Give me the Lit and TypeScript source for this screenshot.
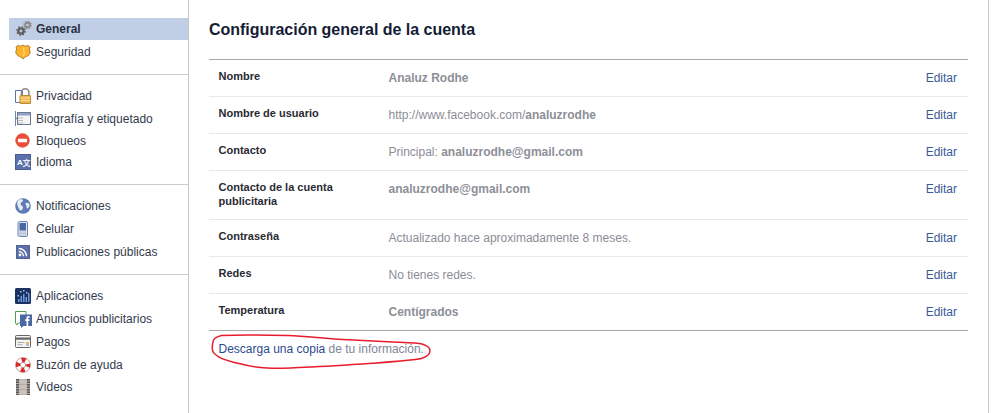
import { LitElement, html, css, svg } from "lit";
import { customElement } from "lit/decorators.js";

const icons: Record<string, unknown> = {
  gear: svg`<g fill="none" stroke="#5f5f5f"><circle cx="6" cy="10" r="2.600" stroke-width="2.400"/><circle cx="6" cy="10" r="4.200" stroke-width="1.400" stroke-dasharray="1.500 1.800"/></g>
    <g fill="none" stroke="#8a8a8a"><circle cx="12.500" cy="4" r="2.300" stroke-width="2"/><circle cx="12.500" cy="4" r="3.700" stroke-width="1.200" stroke-dasharray="1.400 1.500"/></g>`,
  shield: svg`<path d="M3 1.500c1.500.8 3.500.8 5-.5 1.500 1.300 3.500 1.300 5 .5l2 1.500c-.8 1.500-.8 2.500 0 4 .8 3-1.500 4.500-3.500 5.500-1.500.6-2.500 1.200-3.500 2.500-1-1.300-2-1.900-3.500-2.500C2.500 11.500.2 10 1 7c.8-1.500.8-2.500 0-4z" fill="#fcb52a" stroke="#b57f34" stroke-width="1"/><path d="M8.500 3.500c1.200 2-.8 3 .6 4.800 1 1.500-.6 2.500-.8 3.700" fill="none" stroke="#fdd680" stroke-width="1.200"/>`,
  lock: svg`<path d="M.5 2.500h7v12h-7z" fill="#fff" stroke="#5a75ad"/><path d="M6.500 8V4.500a3.700 3.700 0 0 1 7.400 0V8" fill="none" stroke="#8a8a8a" stroke-width="1.600"/><rect x="5" y="7.500" width="10.500" height="8" rx=".5" fill="#f1b74b" stroke="#b98a35"/><path d="M5.500 10h9.500M5.500 12.500h9.500" stroke="#fae0a3"/>`,
  timeline: svg`<path d="M.5 0v15" stroke="#6d84b4"/><path d="M.5 7.500l2-1.500v3z" fill="#6d84b4"/><rect x="2.500" y="1.500" width="13" height="12" fill="#f4f4f4" stroke="#6d7a95"/><path d="M3 2h12v2.500H3z" fill="#8fa3c7"/><path d="M3 7h5M3 9.500h5M3 12h5" stroke="#bbb"/>`,
  block: svg`<circle cx="7.500" cy="7.500" r="7.200" fill="#ea4f3a"/><rect x="3" y="5.800" width="9" height="3.400" rx=".5" fill="#fff"/>`,
  lang: svg`<rect x=".5" y=".5" width="15" height="15" fill="#5c71ab" stroke="#4a5c96"/><text x="2" y="11" font-size="8" font-weight="700" font-family="Liberation Sans" fill="#fff">A</text><text x="7.500" y="11.500" font-size="8" font-weight="700" font-family="Noto Sans CJK SC" fill="#eef1f8">文</text>`,
  globe: svg`<circle cx="8" cy="8" r="7.800" fill="#5f7bb5"/><path d="M4 1.800c2-.8 4-.5 4 .8 0 1.500-2.200 1.500-2.400 3.200-.2 1.800 2 1.600 2.400 3.200.3 1.500-1 3-2 3.800C4 12 3.400 9.500 2.700 8 1.600 6 2 3 4 1.800zM11 5c1.500-.6 3.400.2 3.600 2 .1 1.800-1.400 3.600-2.400 3.400-1-.3-.4-2-1-3C10.500 6.500 10 5.500 11 5z" fill="#e6eaf3"/>`,
  phone: svg`<rect x="3" y=".5" width="9.500" height="15" rx="1.500" fill="#dfe4ee" stroke="#6d84b4"/><rect x="4.500" y="2" width="6.500" height="7.500" fill="#4a66a5"/><path d="M4.500 11h6.500M4.500 12.500h6.500M4.500 14h6.500" stroke="#8fa0c2" stroke-dasharray="1 1"/>`,
  rss: svg`<rect x="1.500" y="1.500" width="13" height="13" fill="#5b70a9" stroke="#4f629a"/><circle cx="5" cy="11" r="1.400" fill="#fff"/><path d="M3.700 7.500a4.800 4.800 0 0 1 4.800 4.800M3.700 4.500a7.800 7.800 0 0 1 7.800 7.800" fill="none" stroke="#fff" stroke-width="1.400"/>`,
  apps: svg`<rect width="16" height="16" rx="1.500" fill="#1b3163"/><path d="M3 14h1.500v-3H3zM5.500 14H7V8H5.500zM8 14h1.500V6H8zM10.500 14H12V9h-1.500zM13 14h1.500V5H13z" fill="#6f9bdc"/><path d="M5 3h1.500v1.500H5zM8 2h1.500v1.500H8zM11 4h1.500v1.500H11zM2.500 7H4v1.500H2.500z" fill="#a9c0e8"/>`,
  ads: svg`<path d="M.5.500h10.500v11.500H3l-1 2-1.500-2z" fill="#fff" stroke="#4ea24e"/><path d="M5 3.500h12V15H8.500L6 17V15H5z" fill="#4b66a5"/><path d="M11.500 15v-5h-1.300V8.200h1.300V7c0-1.300.8-1.900 2-1.900h1.100v1.600h-.8c-.5 0-.6.200-.6.600v.9h1.400L14.400 10h-1.200v5z" fill="#fff"/>`,
  card: svg`<rect x=".5" y="1.500" width="15" height="12" rx="1" fill="#f4f4f4" stroke="#666"/><rect x="1" y="3.500" width="14" height="2.200" fill="#666"/><path d="M2.500 8.500h7M2.500 10.700h5" stroke="#a9a9a9"/><path d="M11 9h3" stroke="#e8a03a" stroke-width="1.500"/><path d="M11 11h3" stroke="#6d84b4"/>`,
  buoy: svg`<circle cx="8" cy="8" r="5" fill="none" stroke="#fff" stroke-width="4.400"/><circle cx="8" cy="8" r="5" fill="none" stroke="#d82c2c" stroke-width="4.400" stroke-dasharray="3.900 3.950" stroke-dashoffset="1.950"/><circle cx="8" cy="8" r="7.400" fill="none" stroke="#9a3a3a" stroke-width=".5"/><circle cx="8" cy="8" r="2.700" fill="none" stroke="#9a3a3a" stroke-width=".5"/>`,
  film: svg`<rect x="1" y="0" width="14" height="16" fill="#b4aea7"/><rect x="4.500" y=".8" width="7" height="4" fill="#c9c3bc"/><rect x="4.500" y="6" width="7" height="4" fill="#c9c3bc"/><rect x="4.500" y="11.200" width="7" height="4" fill="#c9c3bc"/><path d="M2.500 0v16M13.500 0v16" stroke="#555" stroke-width="3" stroke-dasharray="1.500 1"/>`,
};

type Item = { icon: string; label: string; cls?: string };
const groups: Item[][] = [
  [{ icon: "gear", label: "General", cls: "active" }, { icon: "shield", label: "Seguridad" }],
  [
    { icon: "lock", label: "Privacidad" },
    { icon: "timeline", label: "Biografía y etiquetado" },
    { icon: "block", label: "Bloqueos", cls: "pull1" },
    { icon: "lang", label: "Idioma", cls: "pull2" },
  ],
  [
    { icon: "globe", label: "Notificaciones" },
    { icon: "phone", label: "Celular" },
    { icon: "rss", label: "Publicaciones públicas" },
  ],
  [
    { icon: "apps", label: "Aplicaciones" },
    { icon: "ads", label: "Anuncios publicitarios" },
    { icon: "card", label: "Pagos" },
    { icon: "buoy", label: "Buzón de ayuda" },
    { icon: "film", label: "Videos", cls: "pull1" },
  ],
];

const rows = [
  { label: html`Nombre`, value: html`<b>Analuz Rodhe</b>` },
  { label: html`Nombre de usuario`, value: html`http://www.facebook.com/<b>analuzrodhe</b>` },
  { label: html`Contacto`, value: html`Principal: <b>analuzrodhe@gmail.com</b>` },
  { label: html`Contacto de la cuenta publicitaria`, value: html`<b>analuzrodhe@gmail.com</b>`, tall: true },
  { label: html`Contraseña`, value: html`Actualizado hace aproximadamente 8 meses.` },
  { label: html`Redes`, value: html`No tienes redes.` },
  { label: html`Temperatura`, value: html`<b>Centígrados</b>` },
];

@customElement("app-root")
export class AppRoot extends LitElement {
  static styles = css`
    :host {
      display: flex;
      width: 997px;
      height: 413px;
      background: #fff;
      font-family: "Liberation Sans", Arial, sans-serif;
      font-size: 12px;
      color: #333;
      overflow: hidden;
      position: relative;
    }
    .side {
      width: 179px;
      margin-left: 9px;
      padding-top: 18px;
      border-right: 1px solid #c4c4c4;
      flex: none;
    }
    .group { padding-bottom: 11px; border-bottom: 1px solid #ccc; margin: 0 0 9px -9px; padding-left: 9px; }
    .group:last-child { border-bottom: 0; }
    .item {
      display: flex;
      align-items: center;
      height: 23px;
      color: #333a4d;
    }
    .item.pull2 { margin-top: -2px; }
    .item.pull1 { margin-top: -1px; }
    .item.active { height: 22px; background: #c0cfe6; font-weight: 700; color: #2d3142; }
    .ico { width: 16px; height: 16px; margin-left: 6px; margin-right: 5px; flex: none; display: block; overflow: visible; }
    .main {
      width: 800px;
      flex: none;
      border-right: 1px solid #c9c9c9;
      padding: 21px 20px 0 20px;
      box-sizing: border-box;
    }
    h1 {
      margin: 0 0 20px;
      font-size: 16px;
      line-height: 18px;
      font-weight: 700;
      color: #141d35;
      letter-spacing: -0.02px;
    }
    .table { border-top: 1px solid #a9a9a9; border-bottom: 1px solid #a9a9a9; }
    .row {
      display: grid;
      grid-template-columns: 170px 1fr auto;
      height: 37px;
      box-sizing: border-box;
      padding: 11px 11px 0 9.5px;
      border-bottom: 1px solid #e9e9e9;
      line-height: 14px;
    }
    .row:last-child { border-bottom: 0; height: 36px; }
    .row.tall { height: 49px; }
    .label { font-size: 11px; font-weight: 700; color: #2a2a33; line-height: 14px; padding-right: 30px; margin-top: -2px; }
    .value { color: #8b8d96; }
    .value b { font-weight: 700; color: #8d8f98; }
    a { color: #3b5998; text-decoration: none; }
    .foot { padding: 11px 0 0 9.5px; color: #7f8596; line-height: 14px; }
    .foot a { color: #2c4a8e; }
    .mark { position: absolute; left: 210px; top: 334px; width: 224px; height: 38px; pointer-events: none; }
  `;

  render() {
    return html`
      <nav class="side">
        ${groups.map(
          (g) => html`<div class="group">
            ${g.map(
              (i) => html`<div class="item ${i.cls ?? ""}">
                <svg class="ico" viewBox="0 0 16 16">${icons[i.icon]}</svg><span>${i.label}</span>
              </div>`
            )}
          </div>`
        )}
      </nav>
      <main class="main">
        <h1>Configuración general de la cuenta</h1>
        <div class="table">
          ${rows.map(
            (r) => html`<div class="row ${r.tall ? "tall" : ""}">
              <div class="label">${r.label}</div>
              <div class="value">${r.value}</div>
              <a href="#">Editar</a>
            </div>`
          )}
        </div>
        <div class="foot"><a href="#">Descarga una copia</a> de tu información.</div>
      </main>
      <svg class="mark" viewBox="0 0 224 38">
        <path d="M11.700 1.500C30 .5 60 1 78 1.500S112 4.500 128 5.300S165 7 178 7.700S207 8.500 212 10S220 13.500 220 16.700S217 22.500 212 24.300S180 28 162 29.300S115 32.500 95 33.300S75 34.500 62 34.300S38 32 28 29.300S13 26 8.300 22.700S2.300 18 2.300 14.300S3 6 5 4.300S9 2 11.700 1.500Z" fill="none" stroke="#e81c2e" stroke-width="1.500"/>
      </svg>
    `;
  }
}
